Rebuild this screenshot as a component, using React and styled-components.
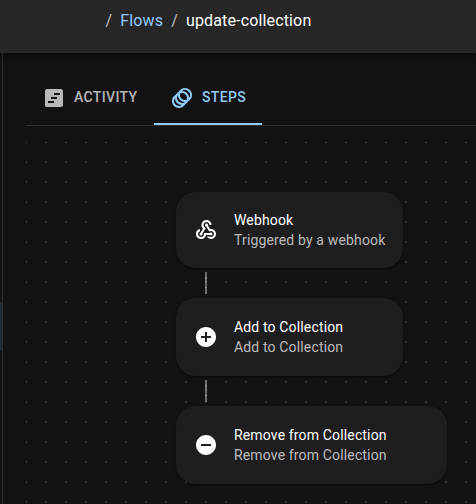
import React from 'react';
import styled, { createGlobalStyle } from 'styled-components';
import { MdAnimation, MdViewTimeline, MdWebhook, MdAddCircle, MdRemoveCircle } from 'react-icons/md';

const GlobalStyle = createGlobalStyle`
  *, *::before, *::after { box-sizing: border-box; }
  body { margin: 0; background: #121212; overflow: hidden; }
`;

const Page = styled.div`
  width: 476px;
  height: 504px;
  display: flex;
  flex-direction: column;
  overflow: hidden;
  background: #121212;
  color: #fff;
  font-family: Roboto, "Liberation Sans", sans-serif;
`;

const Header = styled.header`
  flex: none;
  height: 53px;
  padding: 9px 0 0 105.5px;
  display: flex;
  align-items: flex-start;
  z-index: 1;
  background: #272727;
  box-shadow: 0 2px 4px -1px rgba(0, 0, 0, 0.2), 0 4px 5px rgba(0, 0, 0, 0.14), 0 1px 10px rgba(0, 0, 0, 0.12);
  font-size: 16px;
  line-height: 24px;
  letter-spacing: 0.15px;
  white-space: nowrap;
`;

const Separator = styled.span`
  color: rgba(255, 255, 255, 0.7);
  margin-right: 8px;
`;

const Crumb = styled.span`
  color: ${(p) => (p.$link ? '#90caf9' : '#fff')};
  margin-right: 8px;
`;

const Body = styled.div`
  flex: 1;
  min-height: 0;
  display: flex;
`;

const Rail = styled.aside`
  flex: none;
  width: 3px;
  border-right: 1px solid #2e2e2e;
  padding-top: 249px;
`;

const RailSelection = styled.div`
  height: 48px;
  background: #222d35;
`;

const Main = styled.main`
  flex: 1;
  min-width: 0;
  padding: 17px 0 0 23px;
  display: flex;
  flex-direction: column;
`;

const Tabs = styled.nav`
  flex: none;
  height: 56px;
  display: flex;
  border-bottom: 1px solid #2e2e2e;
`;

const Tab = styled.div`
  width: ${(p) => p.$width}px;
  height: 55px;
  padding: 2px 0 0 16px;
  display: flex;
  align-items: center;
  gap: 8px;
  color: ${(p) => (p.$active ? '#90caf9' : 'rgba(255, 255, 255, 0.7)')};
  border-bottom: 2px solid ${(p) => (p.$active ? '#90caf9' : 'transparent')};
  font-size: 14px;
  font-weight: 500;
  line-height: 17px;
  letter-spacing: 0.35px;
  svg { flex: none; }
`;

const Canvas = styled.section`
  flex: 1;
  min-height: 0;
  margin-top: 16px;
  padding: 50px 0 0 150px;
  display: flex;
  flex-direction: column;
  align-items: flex-start;
  background-image: linear-gradient(#121212 18px, transparent 18px),
    linear-gradient(90deg, #121212 18px, #353535 18px);
  background-size: 20px 20px;
  background-position: 1px 1px;
`;

const Card = styled.article`
  flex: none;
  width: ${(p) => p.$width}px;
  height: ${(p) => p.$height}px;
  padding-left: 18px;
  display: flex;
  align-items: center;
  gap: 16px;
  border-radius: 20px;
  background: #1e1e1e;
  box-shadow: 0 2px 1px -1px rgba(0, 0, 0, 0.2), 0 1px 1px rgba(0, 0, 0, 0.14), 0 1px 3px rgba(0, 0, 0, 0.12);
  svg { flex: none; }
`;

const CardText = styled.div`
  font-size: 14px;
  line-height: 20px;
  letter-spacing: 0.15px;
  white-space: nowrap;
`;

const CardTitle = styled.div`
  color: #fff;
`;

const CardDetail = styled.div`
  color: rgba(255, 255, 255, 0.7);
`;

const Connector = styled.div`
  flex: none;
  width: 2px;
  height: 22px;
  margin: 4px 0 4px 29px;
  background: linear-gradient(
    #6c6c6c 4px, #7c7c7c 4px 6px, #959595 6px 7px, #707070 7px 9px,
    #808080 9px 11px, #6c6c6c 11px 15px, #959595 15px 16px, #707070 16px
  );
`;

const steps = [
  { title: 'Webhook', detail: 'Triggered by a webhook', width: 227, height: 76, Icon: MdWebhook },
  { title: 'Add to Collection', detail: 'Add to Collection', width: 227, height: 78, Icon: MdAddCircle },
  { title: 'Remove from Collection', detail: 'Remove from Collection', width: 271, height: 78, Icon: MdRemoveCircle },
];

export default function App() {
  return (
    <Page>
      <GlobalStyle />
      <Header>
        <Separator>/</Separator>
        <Crumb $link>Flows</Crumb>
        <Separator>/</Separator>
        <Crumb>update-collection</Crumb>
      </Header>
      <Body>
        <Rail>
          <RailSelection />
        </Rail>
        <Main>
          <Tabs>
            <Tab $width={128}>
              <MdViewTimeline size={24} />
              ACTIVITY
            </Tab>
            <Tab $width={108} $active>
              <MdAnimation size={24} />
              STEPS
            </Tab>
          </Tabs>
          <Canvas>
            {steps.map(({ title, detail, width, height, Icon }, i) => (
              <React.Fragment key={title}>
                {i > 0 && <Connector />}
                <Card $width={width} $height={height}>
                  <Icon size={24} />
                  <CardText>
                    <CardTitle>{title}</CardTitle>
                    <CardDetail>{detail}</CardDetail>
                  </CardText>
                </Card>
              </React.Fragment>
            ))}
          </Canvas>
        </Main>
      </Body>
    </Page>
  );
}
